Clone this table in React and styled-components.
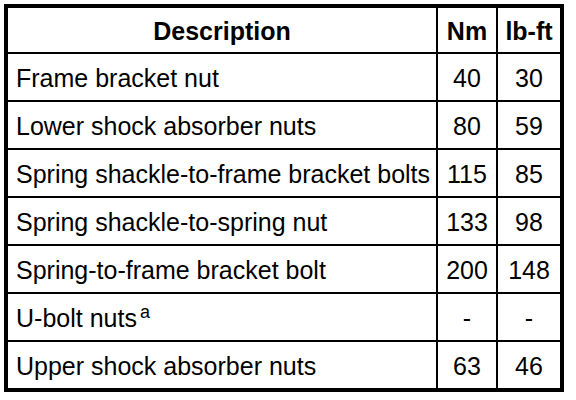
import React from "react"
import styled, { createGlobalStyle } from "styled-components"

const GlobalStyle = createGlobalStyle`
    body {
        margin: 0;
        background: #ffffff;
        font-family: "Liberation Sans", Arial, sans-serif;
    }
`

const Page = styled.div`
    padding: 4px;
`

const Table = styled.div`
    width: 552px;
    display: grid;
    grid-template-columns: 428px 58px 62px;
    grid-auto-rows: 46px;
    grid-template-rows: 44px;
    gap: 2px;
    background: #000000;
    border: 4px solid #000000;
`

const Cell = styled.div`
    background: #ffffff;
    display: flex;
    align-items: center;
    justify-content: ${(p) => (p.$left ? "flex-start" : "center")};
    padding: ${(p) => (p.$left ? "3px 0 0 8px" : "3px 0 0 0")};
    font-size: 25px;
    font-weight: ${(p) => (p.$head ? "bold" : "normal")};
    color: #000000;
    white-space: nowrap;
`

const Sup = styled.sup`
    font-size: 18px;
    line-height: 1;
    margin-left: 3px;
    position: relative;
    top: -7px;
`

const rows = [
    { desc: "Frame bracket nut", nm: "40", lbft: "30" },
    { desc: "Lower shock absorber nuts", nm: "80", lbft: "59" },
    { desc: "Spring shackle-to-frame bracket bolts", nm: "115", lbft: "85" },
    { desc: "Spring shackle-to-spring nut", nm: "133", lbft: "98" },
    { desc: "Spring-to-frame bracket bolt", nm: "200", lbft: "148" },
    { desc: "U-bolt nuts", note: "a", nm: "-", lbft: "-" },
    { desc: "Upper shock absorber nuts", nm: "63", lbft: "46" }
]

export default function App() {
    return (
        <Page>
            <GlobalStyle />
            <Table>
                <Cell $head>Description</Cell>
                <Cell $head>Nm</Cell>
                <Cell $head>lb-ft</Cell>
                {rows.map((row) => (
                    <React.Fragment key={row.desc}>
                        <Cell $left>
                            {row.desc}
                            {row.note && <Sup>{row.note}</Sup>}
                        </Cell>
                        <Cell>{row.nm}</Cell>
                        <Cell>{row.lbft}</Cell>
                    </React.Fragment>
                ))}
            </Table>
        </Page>
    )
}
